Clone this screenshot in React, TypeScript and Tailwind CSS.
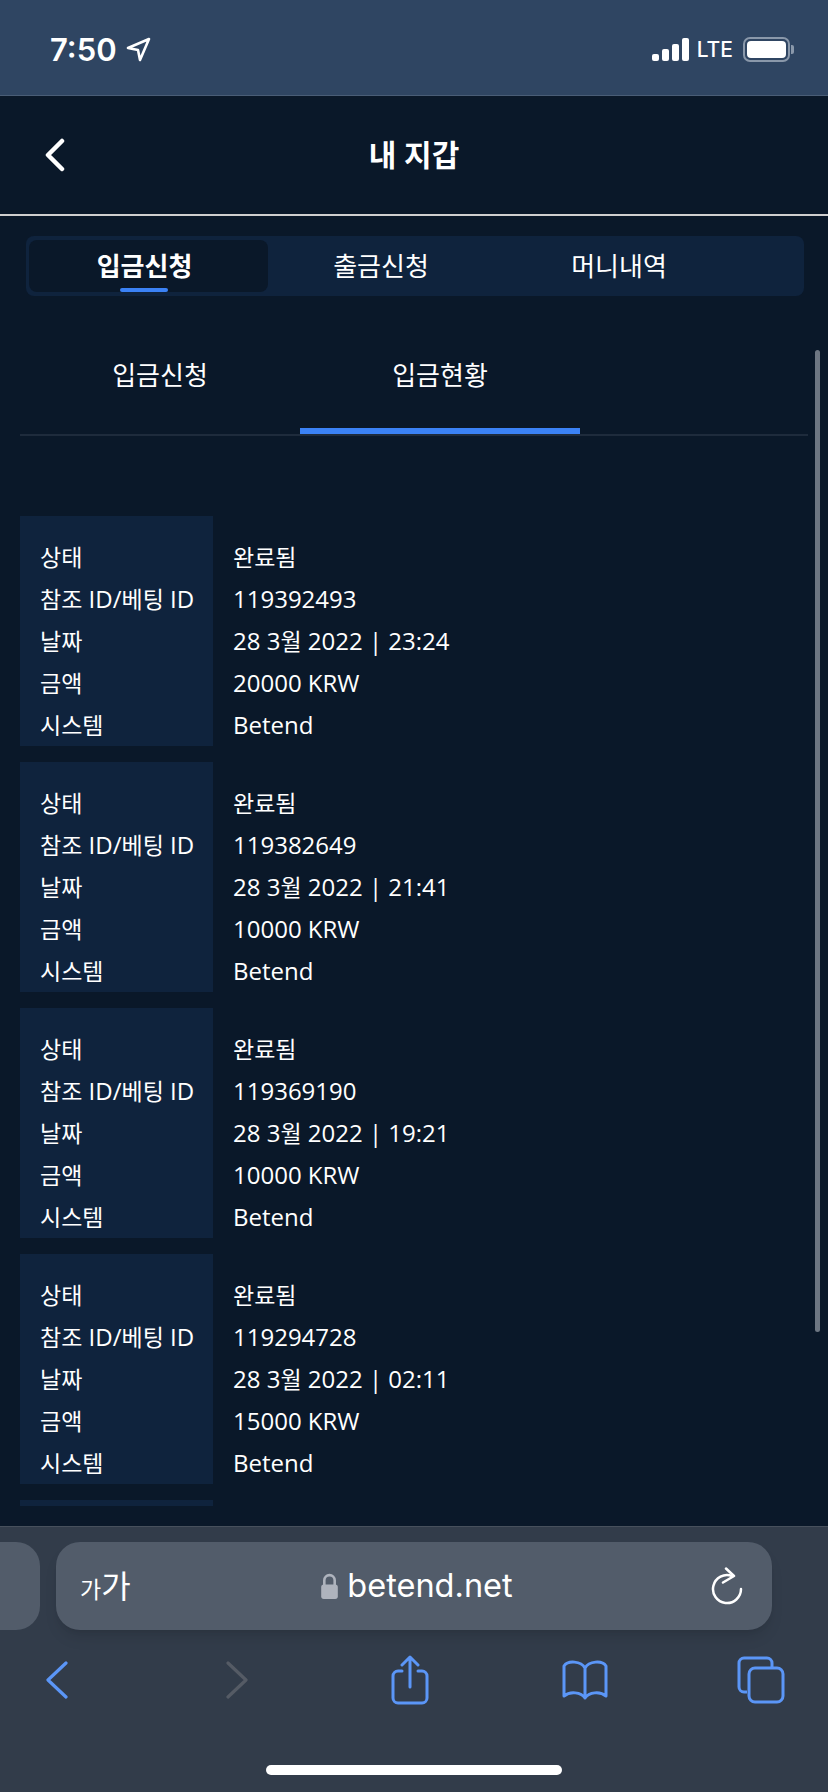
const rows = [
  { id: '119392493', date: '28 3월 2022 | 23:24', amount: '20000 KRW' },
  { id: '119382649', date: '28 3월 2022 | 21:41', amount: '10000 KRW' },
  { id: '119369190', date: '28 3월 2022 | 19:21', amount: '10000 KRW' },
  { id: '119294728', date: '28 3월 2022 | 02:11', amount: '15000 KRW' },
]

const labels = ['상태', '참조 ID/베팅 ID', '날짜', '금액', '시스템']

// latin runs sit a bit larger than hangul in the reference
function Mixed({ text }: { text: string }) {
  return (
    <>
      {text.split(/([가-힣]+)/).map((part, i) =>
        i % 2 === 1 ? (
          <span key={i} className="text-[23px]">{part}</span>
        ) : (
          <span key={i}>{part}</span>
        ),
      )}
    </>
  )
}

function StatusBar() {
  return (
    <div className="flex h-[96px] shrink-0 items-center justify-between border-b border-[#4a5d76] bg-[#2f4562] pt-[3px] pr-[34px] pl-[50px] font-['Inter',sans-serif] text-white">
      <div className="flex items-center gap-[9px]">
        <span className="text-[31px] leading-none font-semibold">7:50</span>
        <svg width="25" height="25" viewBox="0 0 25 25" fill="none" stroke="white" strokeWidth="2.6" strokeLinejoin="round">
          <path d="M2 11 L23 2 L14 23 L12 13 Z" />
        </svg>
      </div>
      <div className="flex items-center">
        <div className="flex items-end gap-[3px]">
          <div className="h-[7px] w-[7px] rounded-[2px] bg-white" />
          <div className="h-[12px] w-[7px] rounded-[2px] bg-white" />
          <div className="h-[17px] w-[7px] rounded-[2px] bg-white" />
          <div className="h-[23px] w-[7px] rounded-[2px] bg-white" />
        </div>
        <span className="ml-[8px] text-[21px] leading-none font-medium">LTE</span>
        <div className="ml-[10px] flex items-center">
          <div className="flex h-[25px] w-[47px] items-center rounded-[7px] border-2 border-[#8a98aa] p-[2px]">
            <div className="h-full w-full rounded-[4px] bg-white" />
          </div>
          <div className="ml-[1px] h-[9px] w-[3px] rounded-r-[2px] bg-[#8a98aa]" />
        </div>
      </div>
    </div>
  )
}

function Card({ id, date, amount }: { id: string; date: string; amount: string }) {
  const values = ['완료됨', id, date, amount, 'Betend']
  return (
    <div className="flex h-[230px] shrink-0">
      <div className="flex w-[193px] flex-col justify-end bg-[#0f233d] pl-[20px]">
        {labels.map((l) => (
          <div key={l} className="h-[42px] leading-[42px] whitespace-nowrap"><Mixed text={l} /></div>
        ))}
      </div>
      <div className="flex flex-col justify-end pl-[20px]">
        {values.map((v, i) => (
          <div key={i} className="h-[42px] leading-[42px] whitespace-nowrap"><Mixed text={v} /></div>
        ))}
      </div>
    </div>
  )
}

function Toolbar() {
  return (
    <div className="mt-[25px] flex h-[50px] items-center pl-[45px] text-[#5b96f7]">
      <svg width="24" height="38" viewBox="0 0 24 38" fill="none" stroke="currentColor" strokeWidth="3.2" strokeLinecap="round" strokeLinejoin="round">
        <path d="M21 2 L3 19 L21 36" />
      </svg>
      <svg className="ml-[156px] text-[#555b65]" width="24" height="38" viewBox="0 0 24 38" fill="none" stroke="currentColor" strokeWidth="3.2" strokeLinecap="round" strokeLinejoin="round">
        <path d="M3 2 L21 19 L3 36" />
      </svg>
      <svg className="ml-[141px]" width="40" height="50" viewBox="0 0 40 50" fill="none" stroke="currentColor" strokeWidth="3" strokeLinecap="round" strokeLinejoin="round">
        <path d="M12 16 H8 a5 5 0 0 0 -5 5 V43 a5 5 0 0 0 5 5 H32 a5 5 0 0 0 5 -5 V21 a5 5 0 0 0 -5 -5 H28" />
        <path d="M20 32 V3 M12 10 L20 2 L28 10" />
      </svg>
      <svg className="ml-[130px]" width="50" height="42" viewBox="0 0 50 42" fill="none" stroke="currentColor" strokeWidth="3" strokeLinecap="round" strokeLinejoin="round">
        <path d="M25 39 V9 C21 2 8 1 4 7 V37 C10 32 21 33 25 39 C29 33 40 32 46 37 V7 C42 1 29 2 25 9" />
      </svg>
      <svg className="ml-[127px]" width="48" height="48" viewBox="0 0 48 48" fill="none" stroke="currentColor" strokeWidth="3" strokeLinejoin="round">
        <path d="M10 36 H7 a5 5 0 0 1 -5 -5 V7 a5 5 0 0 1 5 -5 H30 a5 5 0 0 1 5 5 V12" />
        <rect x="12" y="12" width="34" height="34" rx="6" />
      </svg>
    </div>
  )
}

export default function App() {
  return (
    <div className="relative flex h-[1792px] w-[828px] flex-col overflow-hidden bg-[#0a1829] font-['Open_Sans','Noto_Sans_CJK_KR',sans-serif] text-white">
      <StatusBar />

      <div className="relative flex h-[118px] shrink-0 items-center justify-center">
        <svg className="absolute top-[42px] left-[44px]" width="22" height="34" viewBox="0 0 22 34" fill="none" stroke="white" strokeWidth="4.5" strokeLinecap="round" strokeLinejoin="round">
          <path d="M18 3 L4 17 L18 31" />
        </svg>
        <span className="text-[30px] leading-none font-bold">내 지갑</span>
      </div>
      <div className="h-[2px] shrink-0 bg-[#cfcfcf]" />

      <div className="mt-[20px] mr-[24px] ml-[26px] flex h-[60px] shrink-0 items-center rounded-[8px] bg-[#0f233d] px-[3px] text-[26px]">
        <div className="relative flex h-[52px] w-[239px] items-center justify-center rounded-[8px] bg-[#0a1829] pr-[8px] font-bold">
          입금신청
          <div className="absolute bottom-0 left-[91px] h-[4px] w-[48px] rounded-[2px] bg-[#3b82f6]" />
        </div>
        <div className="flex w-[226px] justify-center">출금신청</div>
        <div className="flex w-[250px] justify-center">머니내역</div>
      </div>

      <div className="mx-[20px] mt-[46px] flex h-[94px] shrink-0 items-start border-b-2 border-[#1e2b3c] text-[26px]">
        <div className="flex h-[92px] w-[280px] justify-center pt-[14px]">입금신청</div>
        <div className="flex h-[92px] w-[280px] justify-center border-b-[6px] border-[#3b82f6] pt-[14px]">입금현황</div>
      </div>

      <div className="mx-[20px] mt-[80px] flex h-[990px] shrink-0 flex-col gap-[16px] overflow-hidden text-[24px]">
        {rows.map((r) => (
          <Card key={r.id} {...r} />
        ))}
        <div className="h-[6px] w-[193px] shrink-0 bg-[#0f233d]" />
      </div>

      <div className="absolute top-[350px] right-[8px] h-[982px] w-[5px] rounded-full bg-[#6d7682]" />

      <div className="mt-auto h-[266px] shrink-0 border-t border-[#47505c] bg-[#323c4a]">
        <div className="mt-[15px] flex gap-[16px]">
          <div className="-ml-[40px] h-[88px] w-[80px] rounded-[24px] bg-[#525c6a]" />
          <div className="flex h-[88px] w-[716px] items-center rounded-[24px] bg-[#525c6a] pr-[29px] pl-[24px] shadow-lg">
            <span className="w-[50px] text-[32px] leading-none whitespace-nowrap text-white"><span className="text-[23px]">가</span>가</span>
            <div className="flex flex-1 items-center justify-center gap-[8px] pr-[8px]">
              <svg width="19" height="27" viewBox="0 0 18 26" fill="none">
                <path d="M4 12 V7 a5 5 0 0 1 10 0 V12" stroke="#aeb3bd" strokeWidth="2.5" />
                <rect x="1" y="11" width="16" height="14" rx="2.5" fill="#aeb3bd" />
              </svg>
              <span className="font-['Inter',sans-serif] text-[32.5px] leading-none">betend.net</span>
            </div>
            <svg width="32" height="38" viewBox="0 0 32 38" fill="none" stroke="white" strokeWidth="2.5" strokeLinecap="round" strokeLinejoin="round">
              <path d="M21 9 A14 14 0 1 0 30 22" />
              <path d="M15 1.5 L23 9 L12 15.5" />
            </svg>
          </div>
        </div>
        <Toolbar />
        <div className="mx-auto mt-[60px] h-[10px] w-[296px] rounded-full bg-white" />
      </div>
    </div>
  )
}
